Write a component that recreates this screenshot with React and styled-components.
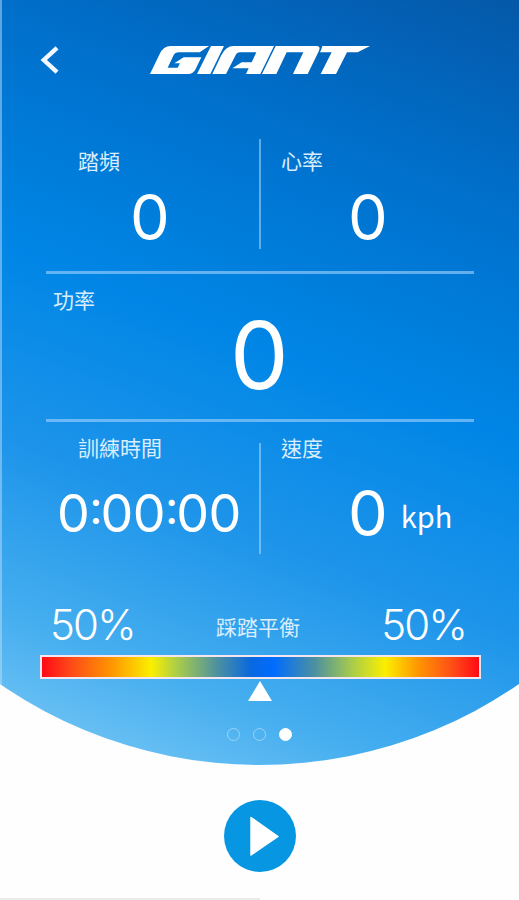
import React from "react";
import styled, { createGlobalStyle } from "styled-components";

const Global = createGlobalStyle`
  * { box-sizing: border-box; }
  body { margin: 0; background: #fefefe; }
`;

const Screen = styled.main`
  width: 519px;
  height: 900px;
  overflow: hidden;
  display: flex;
  flex-direction: column;
  background: #fefefe;
  color: #fff;
  font-family: Inter, "Noto Sans CJK TC", sans-serif;
`;

const Dashboard = styled.section`
  height: 765px;
  flex: none;
  display: flex;
  flex-direction: column;
  border-left: 2px solid rgba(190, 220, 245, 0.5);
  padding: 0 39px 0 38px;
  background: linear-gradient(201deg, #0558a8 0%, #006ec9 20%, #0086e6 46%, #1d94ea 66%, #45aeef 84%, #80cbf6 100%) border-box;
  clip-path: circle(456px at 259.5px 309px);
`;

const Header = styled.header`
  height: 139px;
  flex: none;
  display: flex;
  align-items: flex-start;
`;

const BackButton = styled.button`
  width: 20px;
  height: 30px;
  margin: 45px 0 0;
  padding: 0;
  border: 0;
  background: none;
  svg { display: block; }
`;

const Logo = styled.svg`
  display: block;
  width: 240px;
  height: 50px;
  margin: 35px 0 0 80px;
`;

const Row = styled.div`
  display: grid;
  grid-template-columns: 213px 1px 1fr;
  flex: none;
  height: ${(p) => p.$height}px;
  margin: 0 6px;
`;

const PowerRow = styled.div`
  height: 145px;
  flex: none;
  margin: 0 6px;
  padding: 10px 0 0 7px;
`;

const Rule = styled.div`
  flex: none;
  height: 3px;
  margin: 0 6px;
  background: rgba(170, 214, 255, 0.58);
`;

const Divider = styled.div`
  width: 2px;
  height: ${(p) => p.$height}px;
  margin-top: ${(p) => p.$top || 0}px;
  background: rgba(180, 225, 255, 0.52);
`;

const Metric = styled.div`
  display: flex;
  flex-direction: column;
  padding: ${(p) => p.$top}px 0 0 ${(p) => p.$indent}px;
`;

const Label = styled.span`
  display: block;
  height: 30px;
  margin: ${(p) => p.$margin || "0"};
  font: 400 21px/30px "Noto Sans CJK TC", sans-serif;
  color: #d9edfd;
  white-space: nowrap;
`;

const Value = styled.span`
  display: block;
  font-size: ${(p) => p.$size}px;
  line-height: ${(p) => p.$line}px;
  font-weight: ${(p) => p.$weight || 400};
  margin: ${(p) => p.$margin || "0"};
  letter-spacing: ${(p) => p.$spacing || 0}px;
  white-space: nowrap;
`;

const Clock = styled.div`
  display: flex;
  align-items: flex-start;
  margin: 21px 0 0 1px;
`;

const Colon = styled.span`
  font-size: 46px;
  line-height: 58px;
  letter-spacing: -2px;
  font-feature-settings: "case" 1;
`;

const Speed = styled.div`
  display: flex;
  align-items: flex-start;
  margin: 16px 0 0 67px;
`;

const Unit = styled.span`
  font: 400 29px/40px "Noto Sans CJK TC", sans-serif;
  margin: 17px 0 0 13px;
`;

const BalanceHeader = styled.div`
  height: 55px;
  flex: none;
  display: flex;
  justify-content: space-between;
  align-items: flex-start;
  padding: 0 14px 0 10px;
`;

const BalanceBar = styled.div`
  height: 24px;
  flex: none;
  width: 441px;
  border: 2px solid #f4e6ee;
  background: linear-gradient(90deg, #ff0a16 0%, #ff4d17 7%, #ff9700 16%, #fbef00 25%, #a9cc4a 31%, #4d91a0 40%, #0868e0 48%, #006cff 53%, #4d91a0 62.5%, #a9cc4a 71%, #fbef00 78.5%, #ff9700 86%, #ff4d17 94%, #ff0a16 100%);
`;

const Pointer = styled.svg`
  display: block;
  flex: none;
  width: 24px;
  height: 20px;
  margin: 2px auto 27px 208px;
`;

const Pager = styled.nav`
  display: flex;
  gap: 13px;
  margin-left: 187px;
`;

const Dot = styled.span`
  width: 13px;
  height: 13px;
  border-radius: 50%;
  border: 1px solid ${(p) => (p.$active ? "#fff" : "rgba(190,228,252,.65)")};
  background: ${(p) => (p.$active ? "#fff" : "transparent")};
`;

const Footer = styled.footer`
  flex: 1;
  display: flex;
  flex-direction: column;
  align-items: center;
  padding-top: 35px;
`;

const PlayButton = styled.button`
  width: 72px;
  height: 72px;
  padding: 0;
  border: 0;
  border-radius: 50%;
  background: #0797e2;
  svg { display: block; }
`;

const HomeStrip = styled.div`
  width: 260px;
  height: 2px;
  margin: auto auto 0 0;
  background: #ebebeb;
`;

export default function App() {
  return (
    <>
      <Global />
      <Screen>
        <Dashboard>
          <Header>
            <BackButton aria-label="Back">
              <svg width="20" height="30" viewBox="0 0 20 30">
                <path d="M17 2.8 L3.8 15 L17 27.2" fill="none" stroke="#f2f8fe" strokeWidth="4.4" />
              </svg>
            </BackButton>
            <Logo viewBox="0 0 720 150" fill="#fff">
              <path d="M30 117 L59 57 Q70 33 92 33 H207 L179 52 H114 Q105 52 101 60 L83 98 H113 L120 85 H103 L131 67 H184 L167 102 Q160 117 144 117 Z" />
              <path d="M213 33 H252 L211 117 H171 Z" />
              <path d="M217 117 L243 62 Q257 33 281 33 H402 L361 117 H318 L326 100 H277 L305 82 H335 L349 52 H300 Q291 52 286 62 L258 117 Z" />
              <path d="M366 117 L407 33 H529 Q543 33 537 47 L503 117 H459 L490 52 H440 L409 117 Z" />
              <path d="M547 33 H690 L653 52 H621 L588 117 H542 L575 52 H540 L544 43 Z" />
            </Logo>
          </Header>

          <Row $height={132}>
            <Metric $top={6} $indent={32}>
              <Label>踏頻</Label>
              <Value $size={63} $line={64} $margin="10px 0 0 52px">0</Value>
            </Metric>
            <Divider $height={110} />
            <Metric $top={6} $indent={21}>
              <Label>心率</Label>
              <Value $size={63} $line={64} $margin="10px 0 0 67px">0</Value>
            </Metric>
          </Row>
          <Rule />
          <PowerRow>
            <Label>功率</Label>
            <Value $size={93} $line={80} $margin="1px 0 0 177px">0</Value>
          </PowerRow>
          <Rule />
          <Row $height={178}>
            <Metric $top={10} $indent={10}>
              <Label $margin="0 0 0 22px">訓練時間</Label>
              <Clock>
                <Value $size={52} $line={61} $spacing={-0.6}>0</Value>
                <Colon>:</Colon>
                <Value $size={52} $line={61} $spacing={-0.6}>00</Value>
                <Colon>:</Colon>
                <Value $size={52} $line={61} $spacing={-0.6}>00</Value>
              </Clock>
            </Metric>
            <Divider $height={111} $top={21} />
            <Metric $top={10} $indent={21}>
              <Label>速度</Label>
              <Speed>
                <Value $size={63} $line={70}>0</Value>
                <Unit>kph</Unit>
              </Speed>
            </Metric>
          </Row>

          <BalanceHeader>
            <Value $size={42} $line={49} $weight={350} $spacing={-1.8}>50%</Value>
            <Label $margin="11px 0 0">踩踏平衡</Label>
            <Value $size={42} $line={49} $weight={350} $spacing={-1.8}>50%</Value>
          </BalanceHeader>
          <BalanceBar />
          <Pointer viewBox="0 0 24 20"><path d="M12 0 L24 20 H0 Z" fill="#fff" /></Pointer>
          <Pager>
            <Dot />
            <Dot />
            <Dot $active />
          </Pager>
        </Dashboard>
        <Footer>
          <PlayButton aria-label="Start">
            <svg width="72" height="72" viewBox="0 0 72 72">
              <path d="M27 17.5 L54 36.5 L27 55 Z" fill="#fff" stroke="#fff" strokeWidth="1.5" strokeLinejoin="round" />
            </svg>
          </PlayButton>
          <HomeStrip />
        </Footer>
      </Screen>
    </>
  );
}
